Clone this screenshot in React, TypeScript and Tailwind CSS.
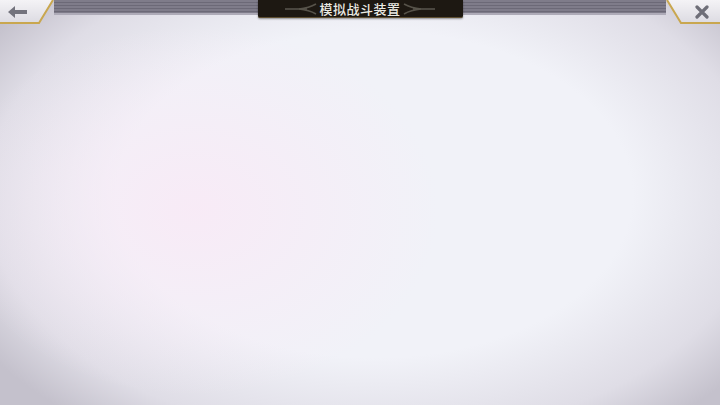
import React from 'react';

const BackButton: React.FC = () => (
  <button className="relative w-[54px] h-[25px] shrink-0">
    <svg className="absolute inset-0" width="54" height="25" viewBox="0 0 54 25">
      <defs>
        <linearGradient id="btnFill" x1="0" y1="0" x2="0" y2="1">
          <stop offset="0" stopColor="#f4f3f6" />
          <stop offset="1" stopColor="#dcdbe2" />
        </linearGradient>
      </defs>
      <polygon points="0,0 53,0 39,23 0,23" fill="url(#btnFill)" />
      <polyline points="53,0 39,23 0,23" fill="none" stroke="#c9a74f" strokeWidth="2" />
    </svg>
    <svg className="absolute left-[8px] top-[6px]" width="20" height="12" viewBox="0 0 20 12">
      <polygon points="0,6 7,0 7,4 19,4 19,8 7,8 7,12" fill="#73737d" />
    </svg>
  </button>
);

const CloseButton: React.FC = () => (
  <button className="relative w-[54px] h-[25px] shrink-0">
    <svg className="absolute inset-0" width="54" height="25" viewBox="0 0 54 25">
      <defs>
        <linearGradient id="btnFillR" x1="0" y1="0" x2="0" y2="1">
          <stop offset="0" stopColor="#f4f3f6" />
          <stop offset="1" stopColor="#dcdbe2" />
        </linearGradient>
      </defs>
      <polygon points="1,0 54,0 54,23 15,23" fill="url(#btnFillR)" />
      <polyline points="1,0 15,23 54,23" fill="none" stroke="#c9a74f" strokeWidth="2" />
    </svg>
    <svg className="absolute left-[29px] top-[5px]" width="14" height="14" viewBox="0 0 14 14">
      <path d="M2 2 L12 12 M12 2 L2 12" stroke="#6e6e78" strokeWidth="3.2" strokeLinecap="round" />
    </svg>
  </button>
);

// soft wing strokes either side of the heading
const Flourish: React.FC<{ flip?: boolean }> = ({ flip }) => (
  <svg width="32" height="12" viewBox="0 0 32 12" className={flip ? 'scale-x-[-1]' : ''}>
    <path d="M0 6 H22" stroke="#4a463f" strokeWidth="2" />
    <path d="M14 6 Q24 5 31 1 M14 6 Q24 7 31 11" stroke="#57534a" strokeWidth="1.6" fill="none" />
  </svg>
);

export default function App() {
  return (
    <div className="w-full h-screen overflow-hidden flex flex-col bg-[radial-gradient(ellipse_34%_46%_at_27%_52%,rgba(248,234,246,0.95),rgba(248,234,246,0)_100%),radial-gradient(ellipse_64%_72%_at_52%_48%,#f1f2f8_56%,#dfdde6_84%,#c4c1cc_100%)] font-['Noto_Sans_CJK_SC',sans-serif]">
      <div className="flex items-start">
        <BackButton />
        <div className="flex-1 h-[15px] flex justify-center bg-[repeating-linear-gradient(180deg,#7f7c8a_0px,#7f7c8a_2px,#6c6977_2px,#6c6977_3px)] border-b-2 border-[#aeabb8]">
          <div className="w-[205px] h-[18px] bg-[#1d1812] border-b border-[#5e4e30] rounded-b-[2px] shadow-[0_1px_2px_rgba(0,0,0,0.4)] flex items-center justify-center gap-[2px]">
            <Flourish />
            <span className="text-[#ecebe4] text-[13px] font-medium leading-none tracking-[0.5px]">模拟战斗装置</span>
            <Flourish flip />
          </div>
        </div>
        <CloseButton />
      </div>
      <div className="flex-1" />
    </div>
  );
}
